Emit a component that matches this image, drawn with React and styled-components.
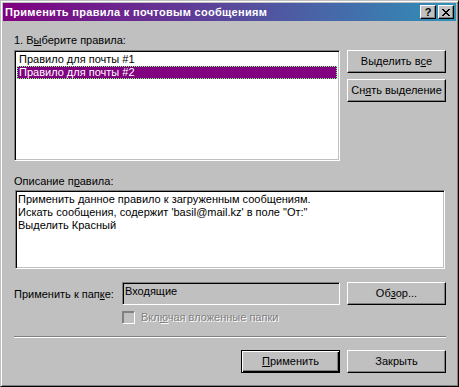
import React from "react";
import styled, { createGlobalStyle, css } from "styled-components";

const Global = createGlobalStyle`
  html, body { margin: 0; padding: 0; background: #c0c0c0; }
  body { font-family: "Liberation Sans", Arial, sans-serif; font-size: 11px; color: #000; }
  * { box-sizing: border-box; }
`;

const sunken = css`
  border: 1px solid;
  border-color: #808080 #fff #fff #808080;
  box-shadow: inset 1px 1px #000, inset -1px -1px #c0c0c0;
`;

const Window = styled.div`
  width: 459px;
  height: 387px;
  background: #c0c0c0;
  border: 1px solid;
  border-color: #c0c0c0 #000 #000 #c0c0c0;
  box-shadow: inset 1px 1px #fff, inset -1px -1px #808080;
  padding: 2px;
  display: flex;
  flex-direction: column;
`;

const TitleBar = styled.div`
  height: 18px;
  display: flex;
  align-items: center;
  padding: 0 2px 0 2px;
  background: linear-gradient(90deg, #800080, #3090b8);
`;

const TitleText = styled.div`
  flex: 1;
  color: #fff;
  font-weight: bold;
  font-size: 11px;
  letter-spacing: 0.3px;
  line-height: 18px;
  white-space: nowrap;
`;

const CapButtons = styled.div`
  display: flex;
  gap: 2px;
`;

const CapButton = styled.div`
  width: 16px;
  height: 14px;
  background: #c0c0c0;
  border: 1px solid;
  border-color: #fff #000 #000 #fff;
  box-shadow: inset -1px -1px #808080;
  display: flex;
  align-items: center;
  justify-content: center;
  font-weight: bold;
  font-size: 11px;
  line-height: 12px;
`;

const Body = styled.div`
  padding: 13px 10px 0 11px;
  display: flex;
  flex-direction: column;
`;

const Label = styled.div`
  line-height: 13px;
  height: 13px;
  white-space: nowrap;
  margin-top: ${(p) => p.$mt || 0}px;
  margin-bottom: ${(p) => p.$mb || 0}px;
  color: ${(p) => (p.$disabled ? "#808080" : "#000")};
  text-shadow: ${(p) => (p.$disabled ? "1px 1px #fff" : "none")};
`;

const Accel = styled.span`
  text-decoration: underline;
  text-underline-offset: 1px;
`;

const RulesRow = styled.div`
  display: flex;
  gap: 7px;
`;

const ListBox = styled.div`
  ${sunken};
  width: 326px;
  height: 111px;
  background: #fff;
  padding: 2px;
`;

const ListItem = styled.div`
  height: 13px;
  line-height: 11px;
  padding-left: 1px;
  white-space: nowrap;
  border: 1px dotted ${(p) => (p.$selected ? "#7fff7f" : "transparent")};
  background: ${(p) => (p.$selected ? "#800080" : "transparent")};
  color: ${(p) => (p.$selected ? "#fff" : "#000")};
`;

const ButtonColumn = styled.div`
  display: flex;
  flex-direction: column;
  gap: 6px;
`;

const Button = styled.div`
  width: 99px;
  height: 23px;
  background: #c0c0c0;
  border: 1px solid;
  border-color: ${(p) => (p.$default ? "#000" : "#fff #000 #000 #fff")};
  box-shadow: ${(p) =>
    p.$default
      ? "inset 1px 1px #fff, inset -1px -1px #000, inset -2px -2px #808080"
      : "inset -1px -1px #808080"};
  display: flex;
  align-items: center;
  justify-content: center;
  white-space: nowrap;
  line-height: 13px;
  padding-bottom: 1px;
`;

const DescBox = styled.div`
  ${sunken};
  margin: 0 1px;
  height: 79px;
  background: #fff;
  padding: 2px 0 0 2px;
  line-height: 13px;
`;

const FolderRow = styled.div`
  margin-top: 13px;
  display: flex;
  align-items: flex-start;
  height: 23px;
`;

const FolderLabel = styled.div`
  width: 108px;
  line-height: 13px;
  padding-top: 6px;
  white-space: nowrap;
`;

const FolderInput = styled.div`
  ${sunken};
  width: 218px;
  height: 23px;
  background: #c0c0c0;
  padding: 2px 2px 0 2px;
  line-height: 13px;
  margin-right: 7px;
`;

const CheckRow = styled.div`
  margin-top: 6px;
  margin-left: 108px;
  display: flex;
  align-items: center;
  gap: 6px;
  height: 13px;
`;

const CheckBox = styled.div`
  width: 13px;
  height: 13px;
  border: 1px solid;
  border-color: #808080 #fff #fff #808080;
  box-shadow: inset 1px 1px #808080, inset -1px -1px #c0c0c0;
  background: #c0c0c0;
`;

const Separator = styled.div`
  margin-top: 12px;
  height: 2px;
  border-top: 1px solid #808080;
  border-bottom: 1px solid #fff;
`;

const BottomRow = styled.div`
  margin-top: 12px;
  display: flex;
  justify-content: flex-end;
  gap: 7px;
`;

export default function App() {
  return (
    <>
      <Global />
      <Window>
        <TitleBar>
          <TitleText>Применить правила к почтовым сообщениям</TitleText>
          <CapButtons>
            <CapButton>?</CapButton>
            <CapButton>
              <svg width="8" height="7" viewBox="0 0 8 7">
                <path
                  d="M0 0h2v1h1v1h2V1h1V0h2v1H7v1H6v1H5v1h1v1h1v1h1v1H6V6H5V5H3v1H2v1H0V6h1V5h1V4h1V3H2V2H1V1H0z"
                  fill="#000"
                />
              </svg>
            </CapButton>
          </CapButtons>
        </TitleBar>
        <Body>
          <Label $mb={3}>
            1. В<Accel>ы</Accel>берите правила:
          </Label>
          <RulesRow>
            <ListBox>
              <ListItem>Правило для почты #1</ListItem>
              <ListItem $selected>Правило для почты #2</ListItem>
            </ListBox>
            <ButtonColumn>
              <Button>
                Выделить в<Accel>с</Accel>е
              </Button>
              <Button>
                Сн<Accel>я</Accel>ть выделение
              </Button>
            </ButtonColumn>
          </RulesRow>
          <Label $mt={14} $mb={2}>
            Описание п<Accel>р</Accel>авила:
          </Label>
          <DescBox>
            Применить данное правило к загруженным сообщениям.
            <br />
            Искать сообщения, содержит 'basil@mail.kz' в поле "От:"
            <br />
            Выделить Красный
          </DescBox>
          <FolderRow>
            <FolderLabel>
              Применить к пап<Accel>к</Accel>е:
            </FolderLabel>
            <FolderInput>Входящие</FolderInput>
            <Button>
              Об<Accel>з</Accel>ор...
            </Button>
          </FolderRow>
          <CheckRow>
            <CheckBox />
            <Label $disabled>
              Вкл<Accel>ю</Accel>чая вложенные папки
            </Label>
          </CheckRow>
          <Separator />
          <BottomRow>
            <Button $default>
              <Accel>П</Accel>рименить
            </Button>
            <Button>Закрыть</Button>
          </BottomRow>
        </Body>
      </Window>
    </>
  );
}
